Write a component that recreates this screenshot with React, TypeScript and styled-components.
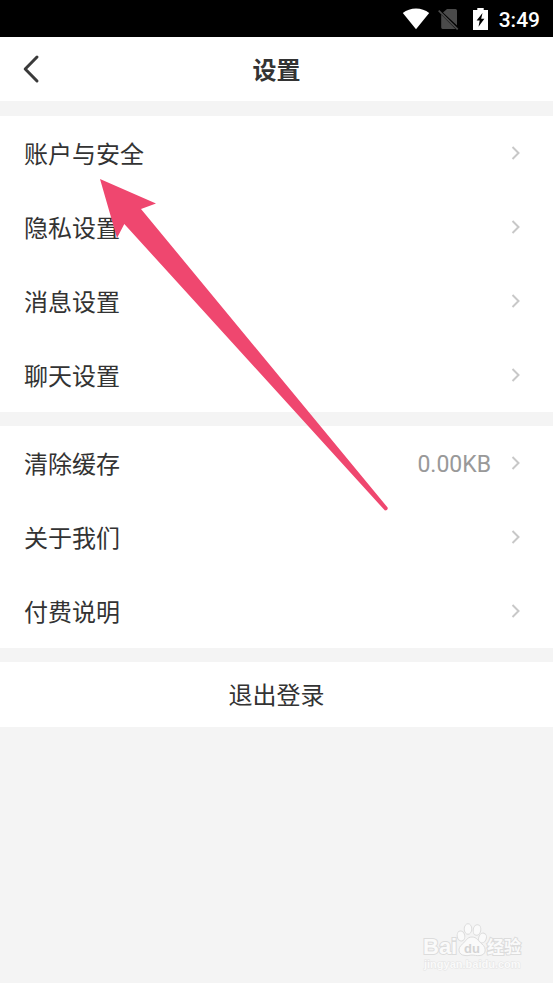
import React from "react";
import styled, { createGlobalStyle } from "styled-components";

const GlobalStyle = createGlobalStyle`
  * { box-sizing: border-box; }
  body { margin: 0; background: #f4f4f4; }
  button { font: inherit; color: inherit; border: 0; padding: 0; margin: 0; background: none; cursor: pointer; }
`;

const Page = styled.div`
  position: relative;
  min-height: 100vh;
  background: #f4f4f4;
  color: #333;
  font-family: Roboto, "Noto Sans CJK SC", sans-serif;
  font-size: 24px;
  line-height: 36px;
`;

const StatusBar = styled.div`
  display: flex;
  align-items: center;
  justify-content: flex-end;
  height: 37px;
  padding-right: 13px;
  background: #000;
  color: #fff;
`;

const StatusIcon = styled.svg<{ $gap: number }>`
  display: block;
  margin-right: ${(p) => p.$gap}px;
`;

const Clock = styled.time`
  font-size: 21px;
  font-weight: 500;
  line-height: 24px;
  padding-top: 2px;
`;

const Header = styled.header`
  display: grid;
  grid-template-columns: 64px 1fr 64px;
  align-items: center;
  height: 64px;
  background: #fff;
`;

const BackButton = styled.button`
  display: flex;
  align-items: center;
  height: 64px;
  padding-left: 22px;
`;

const Title = styled.h1`
  margin: 0;
  padding-top: 3px;
  font-size: 24px;
  font-weight: 700;
  text-align: center;
`;

const Content = styled.main`
  display: flex;
  flex-direction: column;
  gap: 14px;
  padding-top: 15px;
`;

const Group = styled.ul`
  margin: 0;
  padding: 0;
  list-style: none;
  background: #fff;
`;

const Row = styled.button`
  display: flex;
  align-items: center;
  width: 100%;
  height: 74px;
  padding: 0 32px 0 24px;
  text-align: left;
`;

const Label = styled.span`
  flex: 1;
  padding-top: 3px;
`;

const Value = styled.span`
  margin-right: 20px;
  padding-top: 3px;
  font-size: 23px;
  color: #999;
`;

const LogoutButton = styled.button`
  height: 65px;
  padding-top: 3px;
  background: #fff;
  text-align: center;
`;

const Pointer = styled.svg`
  position: absolute;
  left: 100px;
  top: 179px;
  pointer-events: none;
`;

const Watermark = styled.svg`
  position: absolute;
  right: 26px;
  bottom: 8px;
  pointer-events: none;
`;

const Chevron = () => (
  <svg width="10" height="16" viewBox="0 0 10 16" fill="none" stroke="#c8c8c8" strokeWidth="2" aria-hidden="true">
    <path d="M1.5 2l6 6-6 6" />
  </svg>
);

type Item = { label: string; value?: string };

const groups: Item[][] = [
  [{ label: "账户与安全" }, { label: "隐私设置" }, { label: "消息设置" }, { label: "聊天设置" }],
  [{ label: "清除缓存", value: "0.00KB" }, { label: "关于我们" }, { label: "付费说明" }],
];

export default function App() {
  return (
    <Page>
      <GlobalStyle />
      <StatusBar>
        <StatusIcon $gap={8} width="28" height="22" viewBox="0 0 28 22" aria-label="Wi-Fi">
          <path fill="#fff" d="M0.8 5.1Q6.5 0.6 14 0.6T27.2 5.1L14 21.3Z" />
        </StatusIcon>
        <StatusIcon $gap={14} width="21" height="22" viewBox="0 0 21 22" aria-label="No SIM">
          <path fill="#4a4a4a" d="M9 1H17.5Q19 1 19 2.5V17.6L5 4.5ZM3.2 6.4L17.5 21H4.6Q3.2 21 3.2 19.6Z" />
          <path stroke="#4a4a4a" strokeWidth="1.7" d="M0.7 2.7L19.7 21.4" />
        </StatusIcon>
        <StatusIcon $gap={11} width="15" height="22" viewBox="0 0 15 22" aria-label="Charging">
          <path fill="#fff" d="M4.3 0H10.7V2H15V22H0V2H4.3Z" />
          <path fill="#000" d="M9.5 5L3.6 12.6H6.7L5.5 18.8L11.4 10.7H8.2Z" />
        </StatusIcon>
        <Clock>3:49</Clock>
      </StatusBar>
      <Header>
        <BackButton aria-label="返回">
          <svg width="18" height="30" viewBox="0 0 18 30" fill="none" stroke="#3a3a3a" strokeWidth="3" strokeLinejoin="round" strokeLinecap="round">
            <path d="M15 3L3.2 15 15 27" />
          </svg>
        </BackButton>
        <Title>设置</Title>
      </Header>
      <Content>
        {groups.map((items, i) => (
          <Group key={i}>
            {items.map((item) => (
              <li key={item.label}>
                <Row>
                  <Label>{item.label}</Label>
                  {item.value && <Value>{item.value}</Value>}
                  <Chevron />
                </Row>
              </li>
            ))}
          </Group>
        ))}
        <LogoutButton>退出登录</LogoutButton>
      </Content>
      <Pointer width="290" height="334" viewBox="0 0 290 334" aria-hidden="true">
        <path fill="#ef476f" d="M0 0L56 24.5L41 30L287.6 328.5Q288.3 331.500 285 331.600L24.300 45L17 59Z" />
      </Pointer>
      <Watermark width="106" height="54" viewBox="0 0 106 54" aria-label="Baidu 经验">
        <g fill="#fafafa" stroke="#dcdcdc" strokeWidth="1">
          <ellipse cx="40" cy="15" rx="3.800" ry="5" transform="rotate(-12 40 15)" />
          <ellipse cx="47" cy="8" rx="3.800" ry="5.300" />
          <ellipse cx="56" cy="9" rx="3.800" ry="5.300" transform="rotate(10 56 9)" />
          <ellipse cx="61.500" cy="17" rx="3.800" ry="5" transform="rotate(18 61.500 17)" />
          <path d="M51 16C46 16 45 20 41.500 23C36 27 37 34 44 34.500C47 35 49 34 51 34S56 35 59 34.500C65 34 66 27 61 23C57 20 56 16 51 16Z" />
        </g>
        <g fill="#fafafa" stroke="#dcdcdc" strokeWidth="2" paintOrder="stroke" fontFamily='"Liberation Sans", "Noto Sans CJK SC", sans-serif' fontWeight="700">
          <text x="2" y="33" fontSize="22">Bai</text>
          <text x="66" y="32" fontSize="17">经验</text>
          <text x="3" y="47" fontSize="11" strokeWidth="1" stroke="#e4e4e4">jingyan.baidu.com</text>
        </g>
        <text x="43" y="32" fontSize="13" fontFamily='"Liberation Sans", sans-serif' fontWeight="700" fill="#d4d4d4">du</text>
      </Watermark>
    </Page>
  );
}
